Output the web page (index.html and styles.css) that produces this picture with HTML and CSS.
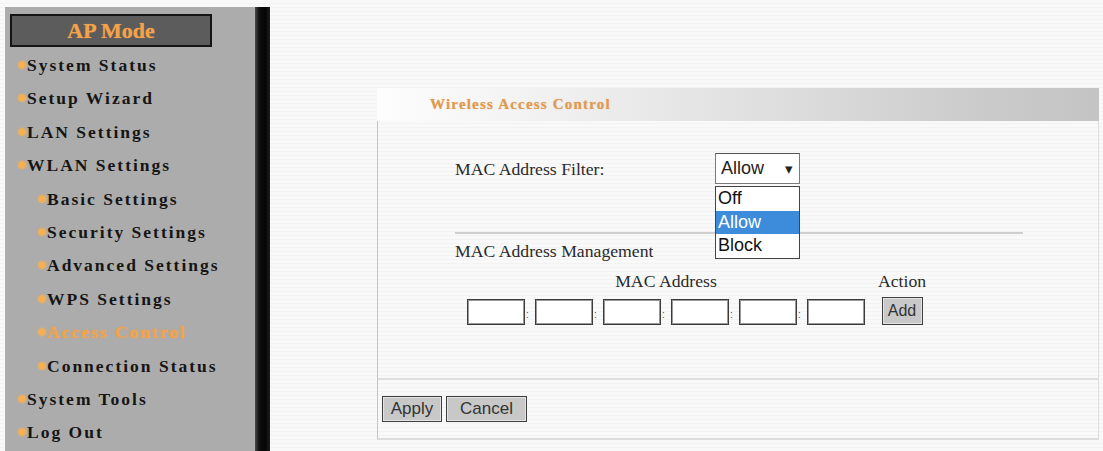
FILE: index.html
```html
<!DOCTYPE html>
<html>
<head>
<meta charset="utf-8">
<link rel="stylesheet" href="styles.css">
</head>
<body>
<div class="page">
  <nav class="sidebar">
    <div class="mode">AP Mode</div>
    <ul class="menu">
      <li class="item">System Status</li>
      <li class="item">Setup Wizard</li>
      <li class="item">LAN Settings</li>
      <li class="item">WLAN Settings</li>
      <li class="item sub">Basic Settings</li>
      <li class="item sub">Security Settings</li>
      <li class="item sub">Advanced Settings</li>
      <li class="item sub">WPS Settings</li>
      <li class="item sub active">Access Control</li>
      <li class="item sub">Connection Status</li>
      <li class="item">System Tools</li>
      <li class="item">Log Out</li>
    </ul>
  </nav>
  <main class="main">
    <div class="title-bar">Wireless Access Control</div>
    <div class="box">
      <div class="upper">
        <div class="filter-row">
          <span class="label">MAC Address Filter:</span>
          <div class="select-wrap">
            <div class="select"><span>Allow</span><span class="arrow">&#9662;</span></div>
            <ul class="options">
              <li>Off</li>
              <li class="selected">Allow</li>
              <li>Block</li>
            </ul>
          </div>
        </div>
        <div class="rule"></div>
        <div class="label mgmt">MAC Address Management</div>
        <div class="mac-table">
          <div class="th">MAC Address</div>
          <div class="th action">Action</div>
          <div class="mac-inputs">
            <span class="field"></span><span class="colon">:</span>
            <span class="field"></span><span class="colon">:</span>
            <span class="field"></span><span class="colon">:</span>
            <span class="field"></span><span class="colon">:</span>
            <span class="field"></span><span class="colon">:</span>
            <span class="field"></span>
          </div>
          <div class="add-cell"><span class="btn add">Add</span></div>
        </div>
      </div>
      <div class="lower">
        <span class="btn apply">Apply</span>
        <span class="btn cancel">Cancel</span>
      </div>
    </div>
  </main>
</div>
</body>
</html>
```

FILE: styles.css
```css
html, body {
  margin: 0;
  padding: 0;
}
body {
  width: 1103px;
  height: 451px;
  overflow: hidden;
  background-color: #f9f9f9;
  background-image: repeating-linear-gradient(to bottom, rgba(255,255,255,0) 0 3px, rgba(0,0,0,0.022) 3px 4px);
  font-family: "Liberation Serif", "Times New Roman", serif;
}
.page {
  display: flex;
  align-items: flex-start;
}
.sidebar {
  margin: 7px 0 0 5px;
  width: 265px;
  height: 444px;
  flex: none;
  background: linear-gradient(to right, #acacac 0 250px, #4a4a4a 250px, #111 254px, #050505 260px, #1d1d1d 265px);
}
.mode {
  margin: 7px 0 0 5px;
  width: 198px;
  height: 29px;
  border: 2px solid #151515;
  background: #5c5c5c;
  color: #f4a24a;
  font-weight: bold;
  font-size: 22px;
  line-height: 29px;
  text-align: center;
  text-shadow: 0 0 1px rgba(244,162,74,0.7);
}
.menu {
  list-style: none;
  margin: 2px 0 0 0;
  padding: 0;
}
.item {
  height: 33.4px;
  line-height: 33.4px;
  padding-left: 12px;
  font-weight: bold;
  font-size: 17.5px;
  letter-spacing: 2px;
  color: #151515;
  white-space: nowrap;
}
.item::before {
  content: "";
  display: inline-block;
  width: 10px;
  height: 10px;
  margin-right: 0;
  border-radius: 50%;
  vertical-align: 1px;
  background: radial-gradient(circle, #f7b050 0 35%, rgba(247,176,80,0.5) 60%, rgba(247,176,80,0) 75%);
}
.item.sub {
  padding-left: 32px;
}
.item.active {
  color: #f3a34c;
  text-shadow: 0 0 2px rgba(243,163,76,0.8);
}
.main {
  flex: 1;
  padding: 88px 4px 0 107px;
}
.title-bar {
  height: 33px;
  line-height: 33px;
  padding-left: 53px;
  background: linear-gradient(to right, #fdfdfd 0%, #f3f3f3 20%, #dedede 55%, #cacaca 85%, #c4c4c4 100%);
  color: #e09a50;
  font-weight: bold;
  font-size: 15px;
  letter-spacing: 1.2px;
  text-shadow: 0 0 1px rgba(224,154,80,0.6);
}
.box {
  border-left: 1px solid #c4c4c4;
  border-right: 1px solid #dcdcdc;
  border-bottom: 2px solid #dcdcdc;
  height: 317px;
  display: flex;
  flex-direction: column;
}
.upper {
  padding: 32px 0 0 77px;
  height: 259px;
  flex: none;
  box-sizing: border-box;
  border-bottom: 2px solid #dedede;
}
.label {
  font-size: 17.7px;
  color: #2a2a2a;
}
.filter-row {
  display: grid;
  grid-template-columns: 260px auto;
  align-items: center;
  height: 31px;
}
.filter-row .label {
  position: relative;
  top: 1px;
}
.select-wrap {
  position: relative;
  width: 85px;
}
.select {
  box-sizing: border-box;
  width: 85px;
  height: 31px;
  border: 1px solid #7a7a7a;
  border-top-color: #555;
  background: #fff;
  display: flex;
  align-items: center;
  justify-content: space-between;
  padding: 0 6px 0 5px;
  font-family: "Liberation Sans", Arial, sans-serif;
  font-size: 18px;
  color: #222;
}
.arrow {
  font-size: 15px;
}
.options {
  position: absolute;
  left: 0;
  top: 33px;
  width: 85px;
  box-sizing: border-box;
  margin: 0;
  padding: 0;
  list-style: none;
  border: 1px solid #444;
  background: #fff;
  font-family: "Liberation Sans", Arial, sans-serif;
  font-size: 18px;
  color: #111;
  z-index: 2;
}
.options li {
  height: 23.5px;
  line-height: 23.5px;
  padding-left: 2px;
}
.options li.selected {
  background: #3d8cdc;
  color: #fff;
}
.rule {
  width: 568px;
  height: 2px;
  background: #cfcfcf;
  margin-top: 48px;
}
.mgmt {
  margin-top: 8px;
  line-height: 18px;
}
.mac-table {
  display: grid;
  grid-template-columns: 398px 48px;
  column-gap: 13px;
  margin: 12px 0 0 12px;
}
.th {
  text-align: center;
  font-size: 17.7px;
  color: #2a2a2a;
  line-height: 18px;
  height: 25px;
}
.mac-inputs {
  display: flex;
  align-items: flex-end;
}
.field {
  box-sizing: border-box;
  width: 58px;
  height: 26px;
  border: 1px solid #3a3a3a;
  background: #fff;
  box-shadow: inset 0 0 0 1px #9a9a9a;
}
.colon {
  width: 10px;
  font-family: "Liberation Sans", Arial, sans-serif;
  font-size: 10px;
  line-height: 10px;
  color: #555;
  padding-bottom: 5px;
  padding-left: 1px;
  box-sizing: border-box;
}
.add-cell {
  display: flex;
  justify-content: center;
}
.btn {
  box-sizing: border-box;
  display: inline-flex;
  align-items: center;
  justify-content: center;
  height: 26px;
  background: #c8c8c8;
  border: 1px solid #3e3e3e;
  box-shadow: inset 0 0 0 1px #e4e4e4;
  font-family: "Liberation Sans", Arial, sans-serif;
  font-size: 17px;
  color: #333;
}
.btn.add {
  width: 41px;
  height: 28px;
  font-size: 16px;
}
.lower {
  display: flex;
  gap: 4px;
  padding: 16px 0 0 4px;
}
.btn.apply {
  width: 60px;
}
.btn.cancel {
  width: 81px;
}
```
